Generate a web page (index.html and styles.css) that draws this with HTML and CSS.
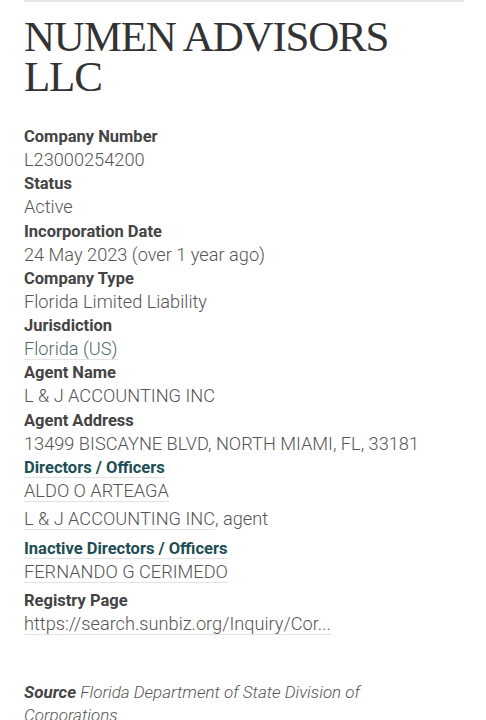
FILE: index.html
```html
<!DOCTYPE html>
<html lang="en">
<head>
<meta charset="utf-8">
<title>NUMEN ADVISORS LLC</title>
<link rel="stylesheet" href="styles.css">
</head>
<body>
<main class="page">
  <h1 class="title">NUMEN ADVISORS LLC</h1>
  <dl class="attrs">
    <dt>Company Number</dt>
    <dd>L23000254200</dd>
    <dt>Status</dt>
    <dd>Active</dd>
    <dt>Incorporation Date</dt>
    <dd>24 May 2023 (over 1 year ago)</dd>
    <dt>Company Type</dt>
    <dd>Florida Limited Liability</dd>
    <dt>Jurisdiction</dt>
    <dd><a class="link jur" href="#">Florida (US)</a></dd>
    <dt>Agent Name</dt>
    <dd>L &amp; J ACCOUNTING INC</dd>
    <dt>Agent Address</dt>
    <dd>13499 BISCAYNE BLVD, NORTH MIAMI, FL, 33181</dd>
    <dt class="section"><a class="sec-link" href="#">Directors / Officers</a></dt>
    <dd>
      <ul class="officers">
        <li><a class="link" href="#">ALDO O ARTEAGA</a></li>
        <li><a class="link" href="#">L &amp; J ACCOUNTING INC</a>, agent</li>
      </ul>
    </dd>
    <dt class="section"><a class="sec-link" href="#">Inactive Directors / Officers</a></dt>
    <dd>
      <ul class="officers">
        <li><a class="link" href="#">FERNANDO G CERIMEDO</a></li>
      </ul>
    </dd>
    <dt class="reg">Registry Page</dt>
    <dd><a class="link" href="#">https://search.sunbiz.org/Inquiry/Cor...</a></dd>
  </dl>
  <p class="source"><b>Source</b> Florida Department of State Division of Corporations</p>
</main>
</body>
</html>
```
FILE: styles.css
```css
html, body {
  margin: 0;
  padding: 0;
  background: #fff;
}
body {
  font-family: Roboto, "Noto Sans", sans-serif;
  color: #555;
}
.page {
  margin: 0 22px 0 24px;
  border-top: 2px solid #e6e6e6;
}
.title {
  font-family: "Liberation Serif", "Times New Roman", serif;
  font-weight: 400;
  font-size: 43px;
  letter-spacing: -1.2px;
  line-height: 40px;
  color: #333;
  margin: 15px 0 28px;
  padding: 0;
}
.attrs {
  margin: 0;
  padding: 0;
}
.attrs dt {
  font-size: 16.5px;
  font-weight: 700;
  color: #444;
  line-height: 23px;
}
.attrs dd {
  margin: 0;
  font-size: 18.2px;
  font-weight: 300;
  color: #555;
  line-height: 24.3px;
}
.link {
  color: #555;
  text-decoration: none;
  border-bottom: 1.5px solid #e3e3e3;
}
.link.jur {
  color: #4f6b6b;
}
.sec-link {
  color: #1d4d55;
  text-decoration: none;
  border-bottom: 1.5px solid #e3e3e3;
}
.officers {
  list-style: none;
  margin: 0 0 5px;
  padding: 0;
}
.officers li {
  margin-bottom: 4px;
}
.source {
  margin: 45px 0 0;
  max-width: 420px;
  font-size: 17px;
  font-style: italic;
  font-weight: 300;
  line-height: 23px;
  color: #555;
}
.source b {
  font-weight: 700;
  color: #444;
}
```
